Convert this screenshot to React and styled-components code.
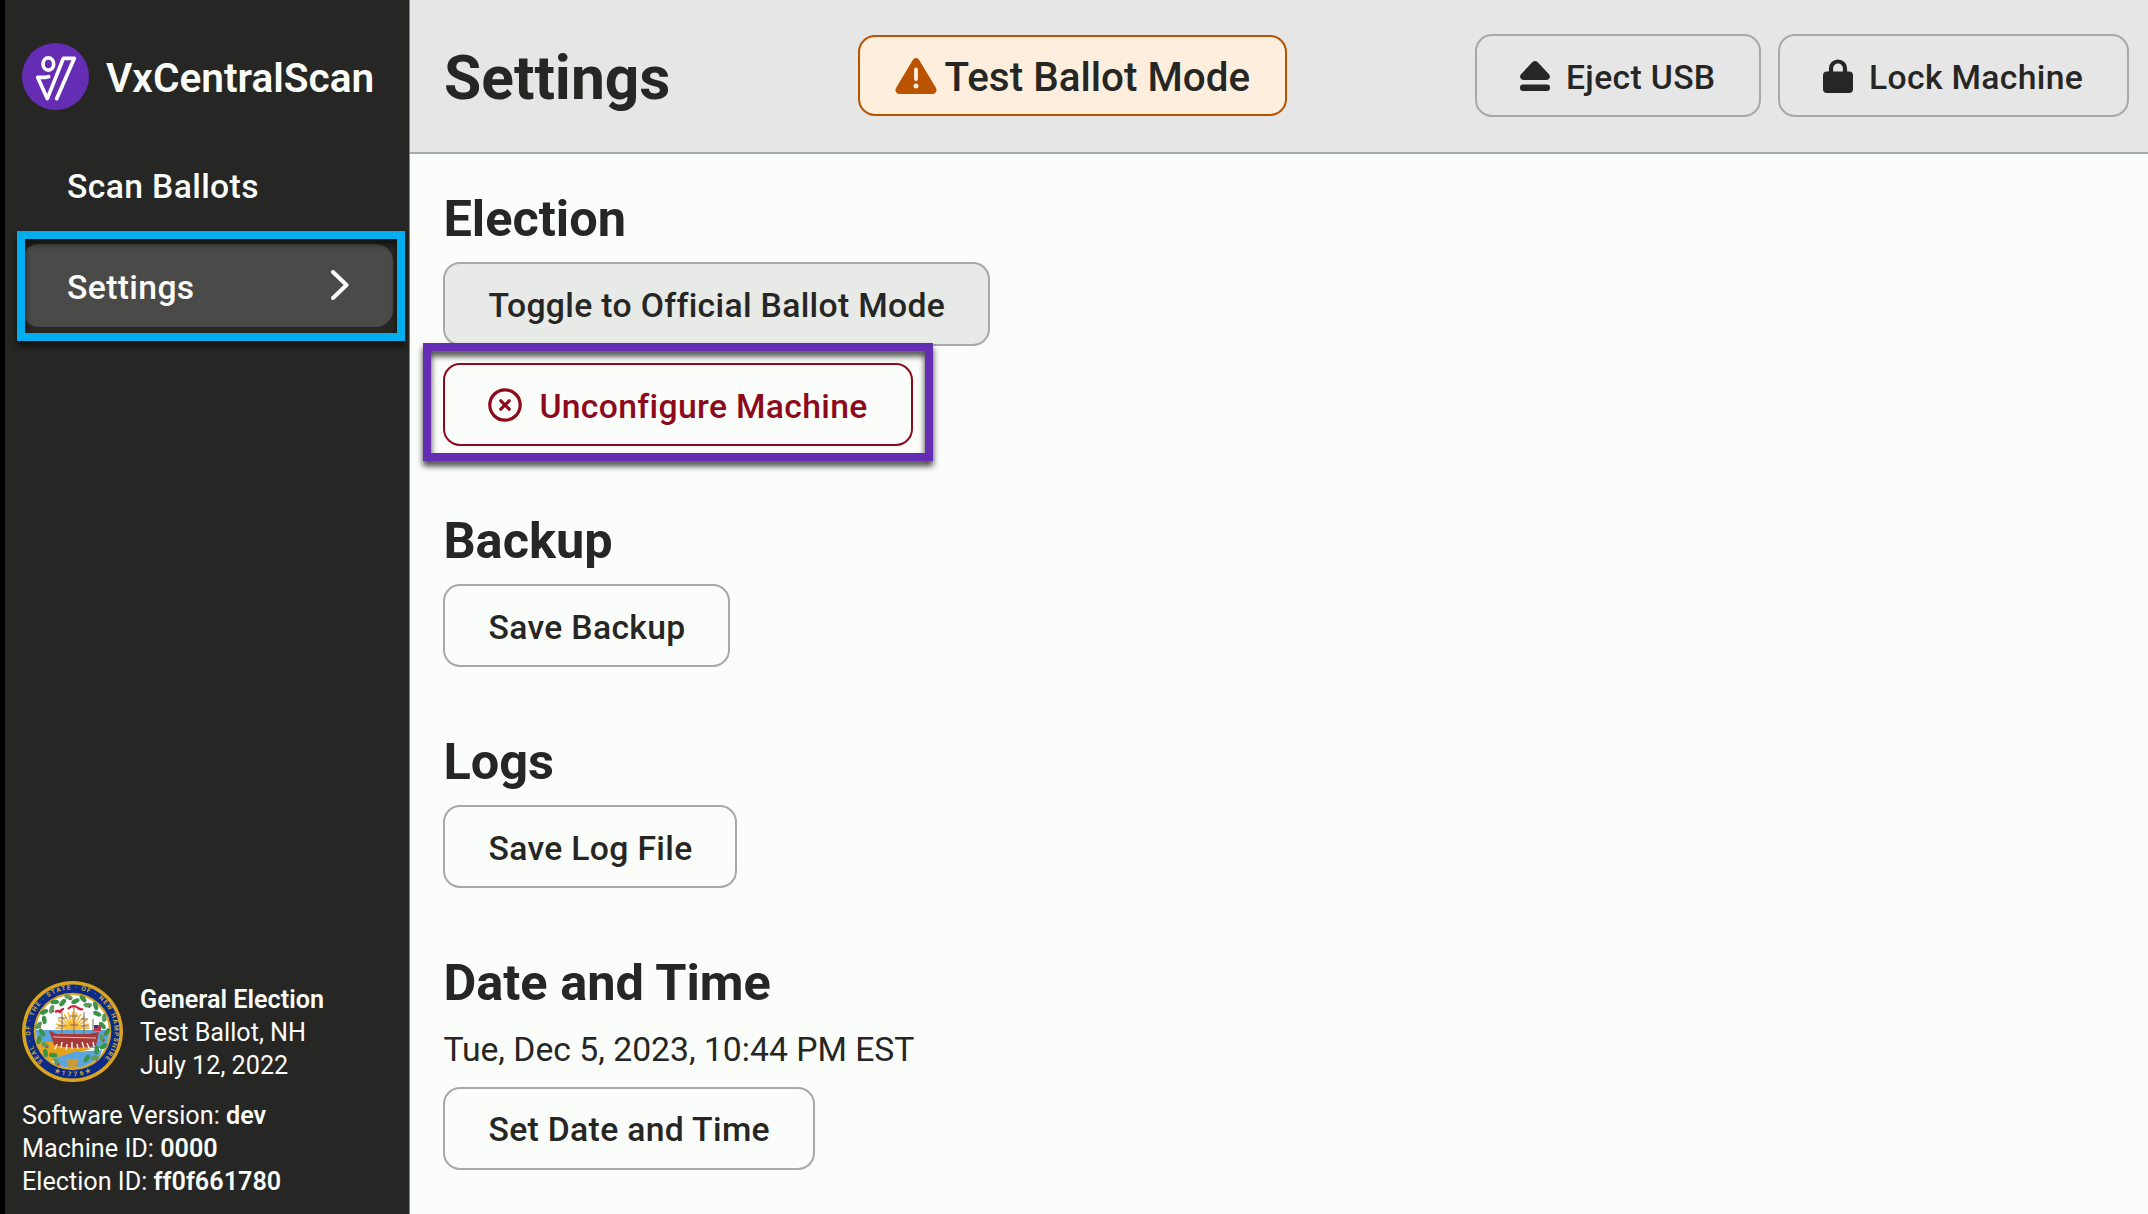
import React from "react";
import styled, { createGlobalStyle } from "styled-components";

const Global = createGlobalStyle`
  * { box-sizing: border-box; }
  html, body { margin: 0; padding: 0; }
  body {
    font-family: Roboto, "Liberation Sans", sans-serif;
    color: #262624;
    background: #fafdf9;
    overflow: hidden;
  }
`;

const Screen = styled.div`
  display: flex;
  width: 2148px;
  height: 1214px;
  border-left: 5px solid #000;
`;

const Sidebar = styled.aside`
  width: 405px;
  flex: none;
  display: flex;
  flex-direction: column;
  justify-content: space-between;
  background: #262624;
  color: #fafcf9;
  border-right: 1px solid #858582;
`;

const Brand = styled.div`
  display: flex;
  align-items: center;
  gap: 17px;
  height: 67px;
  margin: 43px 0 0 17px;
`;

const BrandName = styled.div`
  font-size: 40.6px;
  line-height: 48px;
  font-weight: 600;
  padding-top: 3px;
`;

const NavList = styled.nav`
  display: flex;
  flex-direction: column;
  gap: 17px;
  margin: 33px 16px 0 17px;
`;

const NavItem = styled.a`
  position: relative;
  display: flex;
  align-items: center;
  justify-content: space-between;
  height: 83.5px;
  padding: 4px 44.5px 0 45px;
  border-radius: 17px;
  font-size: 33.7px;
  font-weight: 500;
  letter-spacing: 0.36px;
  background: ${(p) => (p.$active ? "#4a4a49" : "transparent")};

  svg { margin-bottom: 4px; }
`;

const Highlight = styled.span`
  position: absolute;
  inset: ${(p) => p.$inset};
  border: ${(p) => p.$width} solid ${(p) => p.$color};
  filter: drop-shadow(0 5px 3px ${(p) => p.$shadow});
  pointer-events: none;
`;

const Info = styled.footer`
  padding: 0 0 16px 17px;
  font-size: 25.2px;
  line-height: 33px;
`;

const ElectionInfo = styled.div`
  display: flex;
  align-items: center;
  gap: 17px;
  margin-bottom: 17px;
`;

const ElectionText = styled.div`
  padding-top: 3px;
`;

const Strong = styled.span`
  font-weight: 600;
`;

const Page = styled.div`
  flex: 1;
  display: flex;
  flex-direction: column;
`;

const Header = styled.header`
  display: flex;
  align-items: center;
  height: 154px;
  padding: 0 19px 1px 34px;
  background: #e6e6e6;
  border-bottom: 2px solid #a8a8ab;
`;

const Title = styled.h1`
  margin: 0;
  width: 414px;
  font-size: 60.5px;
  line-height: 72px;
  font-weight: 700;
  padding-top: 7px;
`;

const ModeBadge = styled.div`
  display: flex;
  align-items: center;
  gap: 8px;
  width: 429px;
  height: 81px;
  padding-left: 34.5px;
  border: 2px solid #b95300;
  border-radius: 17px;
  background: #fdeedd;
  font-size: 40.4px;
  font-weight: 500;
`;

const HeaderActions = styled.div`
  display: flex;
  gap: 17px;
  margin-left: auto;
`;

const Label = styled.span`
  padding-top: 3px;
`;

const Button = styled.button`
  position: relative;
  display: flex;
  align-items: center;
  height: 83.5px;
  width: ${(p) => p.$w}px;
  padding: 0 0 0 43px;
  gap: ${(p) => p.$gap || 16}px;
  border: 2px solid ${(p) => (p.$danger ? "#8c0a1c" : "#a8a8ab")};
  border-radius: 17px;
  background: ${(p) => (p.$filled ? "#e8eae7" : "transparent")};
  color: ${(p) => (p.$danger ? "#8c0a1c" : "#262624")};
  font-family: inherit;
  font-size: 33.7px;
  font-weight: 500;
  letter-spacing: 0.34px;
  white-space: nowrap;
`;

const Content = styled.main`
  display: flex;
  flex-direction: column;
  gap: 64.3px;
  padding: 35px 0 0 33.4px;
`;

const Section = styled.section`
  display: flex;
  flex-direction: column;
  align-items: flex-start;
`;

const Heading = styled.h2`
  margin: 0 0 13.3px;
  font-size: 50.5px;
  line-height: 60px;
  font-weight: 700;
`;

const ButtonStack = styled.div`
  display: flex;
  flex-direction: column;
  gap: 17px;
`;

const Time = styled.p`
  margin: 4px 0 16px;
  font-size: 33.7px;
  line-height: 40.5px;
`;

const Logo = () => (
  <svg width="67" height="67" viewBox="0 0 201 201">
    <circle cx="100.500" cy="100.500" r="100.500" fill="#652db3" />
    <g fill="none" stroke="#fff" strokeWidth="11" strokeLinejoin="round" strokeLinecap="round">
      <ellipse cx="79" cy="63" rx="16" ry="18.500" />
      <path d="M80 101L71 103H47L76 167L124 46H157L104 167" />
    </g>
  </svg>
);

const Wreath = () =>
  Array.from({ length: 26 }, (_, i) => {
    const a = ((i * 12.2 + 117) * Math.PI) / 180;
    const r = i % 2 ? 30.5 : 34.5;
    const x = 50.5 + r * Math.cos(a);
    const y = 50.5 + r * Math.sin(a);
    return (
      <g key={i}>
        <ellipse cx={x} cy={y} rx="4.4" ry="2.3" fill={i % 3 ? "#3b9147" : "#5b9c63"}
          transform={`rotate(${i * 12.2 + 117 + (i % 2 ? 60 : 120)} ${x} ${y})`} />
        {i % 3 === 0 && <circle cx={x + 1.5} cy={y + 2} r="0.9" fill="#c62a3b" />}
      </g>
    );
  });

const Seal = () => (
  <svg width="101" height="101" viewBox="0 0 101 101">
    <defs>
      <clipPath id="sealInner"><circle cx="50.500" cy="50.500" r="36.500" /></clipPath>
      <path id="sealTop" d="M22.500 81.800A42 42 0 1 1 78.500 81.800" />
      <path id="sealBottom" d="M26 88A45 45 0 0 0 75 88" />
    </defs>
    <circle cx="50.500" cy="50.500" r="50.500" fill="#d9a520" />
    <circle cx="50.500" cy="50.500" r="47" fill="#0b2b86" />
    <circle cx="50.500" cy="50.500" r="38.800" fill="#d9a520" />
    <g clipPath="url(#sealInner)">
      <rect width="101" height="101" fill="#fff" />
      <g stroke="#f2b634" strokeWidth="1.600">
        {Array.from({ length: 13 }, (_, i) => {
          const a = (Math.PI * (i + 0.2)) / 12.4;
          return <path key={i} d={`M50.500 48L${50.5 - 17 * Math.cos(a)} ${48 - 17 * Math.sin(a)}`} />;
        })}
      </g>
      <circle cx="50.500" cy="48" r="7.500" fill="#f6bd39" />
      <path d="M12 49H90V67H12z" fill="#5ba4de" />
      <path d="M12 61L32 61L70 68L48 73L30 80L12 80z" fill="#e5a31e" />
      <path d="M30 78L52 71L80 69L74 87L40 90z" fill="#5ba4de" />
    </g>
    <Wreath />
    <path d="M44 78L57 78L54 87L47 87z" fill="#c99b33" />
    <g stroke="#8a6251" strokeWidth="1" fill="none">
      <path d="M40 28V55M52 26V55M62 31V55M71 38V55M36 37H44M48 35H56M59 38H66M36 45H44M48 44H56M59 45H67" />
    </g>
    <path d="M33 31Q36 29 38 31Q39 28 42 28M46 28Q51 23 56 27Q59 29 61 28" stroke="#c7233f" strokeWidth="2.200" fill="none" />
    <path d="M27 49L34 53H67L77 51L74 65Q51 69 32 64z" fill="#a53a38" />
    <path d="M31 56L74 57" stroke="#e1c7b4" strokeWidth="1" />
    <path d="M35 63L33 68M40 61L39 67M45 63L44 69M50 61L50 68M55 63L56 68M60 61L62 67M65 62L67 67M71 61L72 66" stroke="#f4ebe2" strokeWidth="1.500" />
    <path d="M72 44H79V50H72z" fill="#b83b4b" />
    <path d="M72 44H76V47H72z" fill="#263f86" />
    <g fill="#c9ab4a" fontFamily="Roboto, sans-serif" fontWeight="700" fontSize="6.400">
      <text><textPath href="#sealTop" startOffset="2" textLength="194">SEAL · OF · THE · STATE · OF · NEW HAMPSHIRE</textPath></text>
      <text><textPath href="#sealBottom" startOffset="50%" textAnchor="middle" textLength="38">★1776★</textPath></text>
    </g>
  </svg>
);

const ChevronRight = () => (
  <svg width="18" height="30" viewBox="0 0 18 30">
    <path d="M2 2L15.500 15L2 28" fill="none" stroke="#fafcf9" strokeWidth="4" strokeLinecap="round" strokeLinejoin="round" />
  </svg>
);

const Warning = () => (
  <svg width="42" height="36" viewBox="0 0 42 36">
    <path d="M21 0Q23 0 24.200 2L41 30Q42 32 41.200 33.800Q40 36 37.500 36H4.500Q2 36 .8 33.800Q0 32 1 30L17.800 2Q19 0 21 0z" fill="#b95300" />
    <path d="M21 11.500V21" stroke="#fdeedd" strokeWidth="3.800" strokeLinecap="round" />
    <circle cx="21" cy="28" r="2.500" fill="#fdeedd" />
  </svg>
);

const Eject = () => (
  <svg width="30" height="30" viewBox="0 0 30 30" fill="#262624">
    <path d="M15 0Q16.500 0 17.500 1L29 13.200Q30.500 15 29.600 17Q28.700 19 26.500 19H3.500Q1.300 19 .4 17Q-.5 15 1 13.200L12.500 1Q13.500 0 15 0z" />
    <rect y="23.500" width="30" height="6.500" rx="3" />
  </svg>
);

const Lock = () => (
  <svg width="30" height="34" viewBox="0 0 30 34">
    <path d="M8 15V9.500a7 7 0 0 1 14 0V15" fill="none" stroke="#262624" strokeWidth="4.200" />
    <rect y="12.500" width="30" height="21.500" rx="4" fill="#262624" />
  </svg>
);

const CircleX = () => (
  <svg width="34" height="34" viewBox="0 0 34 34" fill="none" stroke="#8c0a1c" strokeWidth="3.200" strokeLinecap="round">
    <circle cx="17" cy="17" r="15.200" />
    <path d="M12.800 12.800L21.200 21.200M21.200 12.800L12.800 21.200" />
  </svg>
);

export default function App() {
  return (
    <>
      <Global />
      <Screen>
        <Sidebar>
          <div>
            <Brand>
              <Logo />
              <BrandName>VxCentralScan</BrandName>
            </Brand>
            <NavList>
              <NavItem>Scan Ballots</NavItem>
              <NavItem $active>
                Settings
                <ChevronRight />
                <Highlight $inset="-12.5px -12px -13.5px -5px" $width="8px" $color="#00aeef" $shadow="rgba(0,0,0,.6)" />
              </NavItem>
            </NavList>
          </div>
          <Info>
            <ElectionInfo>
              <Seal />
              <ElectionText>
                <Strong>General Election</Strong>
                <div>Test Ballot, NH</div>
                <div>July 12, 2022</div>
              </ElectionText>
            </ElectionInfo>
            <div>Software Version: <Strong>dev</Strong></div>
            <div>Machine ID: <Strong>0000</Strong></div>
            <div>Election ID: <Strong>ff0f661780</Strong></div>
          </Info>
        </Sidebar>
        <Page>
          <Header>
            <Title>Settings</Title>
            <ModeBadge><Warning /><Label>Test Ballot Mode</Label></ModeBadge>
            <HeaderActions>
              <Button $w={286}><Eject /><Label>Eject USB</Label></Button>
              <Button $w={351}><Lock /><Label>Lock Machine</Label></Button>
            </HeaderActions>
          </Header>
          <Content>
            <Section>
              <Heading>Election</Heading>
              <ButtonStack>
                <Button $w={547} $filled><Label>Toggle to Official Ballot Mode</Label></Button>
                <Button $w={470} $danger $gap={17}>
                  <CircleX /><Label>Unconfigure Machine</Label>
                  <Highlight $inset="-21.5px -22px -17px -22.5px" $width="8px" $color="#652db3" $shadow="rgba(0,0,0,.75)" />
                </Button>
              </ButtonStack>
            </Section>
            <Section>
              <Heading>Backup</Heading>
              <Button $w={287}><Label>Save Backup</Label></Button>
            </Section>
            <Section>
              <Heading>Logs</Heading>
              <Button $w={294}><Label>Save Log File</Label></Button>
            </Section>
            <Section>
              <Heading>Date and Time</Heading>
              <Time>Tue, Dec 5, 2023, 10:44 PM EST</Time>
              <Button $w={372}><Label>Set Date and Time</Label></Button>
            </Section>
          </Content>
        </Page>
      </Screen>
    </>
  );
}
